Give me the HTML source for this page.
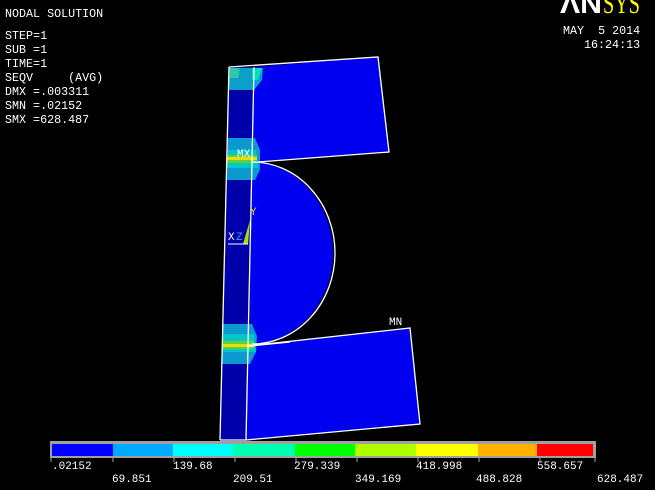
<!DOCTYPE html>
<html><head><meta charset="utf-8"><style>
html,body{margin:0;padding:0;background:#000;width:655px;height:490px;overflow:hidden}
svg{display:block}
text{font-family:"Liberation Mono",monospace;font-size:11px;fill:#fff;white-space:pre}
.t{font-size:11.7px}
</style></head><body>
<svg width="655" height="490" viewBox="0 0 655 490" xml:space="preserve">
<rect width="655" height="490" fill="#000"/>
<polygon points="252,67 378,57 389,152 252,162" fill="#0000f0"/>
<path d="M250,162 A83,91 0 0 1 250,344 Z" fill="#0000f0"/>
<polygon points="248,346 410,328 420,424 246,440" fill="#0000f0"/>
<polygon points="229,67 254,67 246,440 220,440" fill="#0000aa"/>
<path d="M229,68 L263,68 L262,80 L254,90 L229,90 Z" fill="#0aa0c8"/>
<path d="M230,68 L240,68 L238,78 L230,78Z" fill="#30c8a0"/>
<path d="M252,68 L262,68 L258,80 L252,80Z" fill="#00e0c0"/>
<path d="M228,138 L255,138 L260,150 L260,170 L255,180 L227,180 Z" fill="#0a9ad0"/>
<path d="M228,150 L256,150 L258,168 L227,168 Z" fill="#00c8c8"/>
<rect x="227" y="155" width="30" height="8" fill="#60d040"/>
<rect x="227" y="157" width="30" height="3" fill="#e8e000"/>
<path d="M223,324 L252,324 L257,336 L256,352 L250,364 L222,364 Z" fill="#0a9ad0"/>
<path d="M223,334 L254,334 L256,352 L222,352 Z" fill="#00c8c8"/>
<rect x="222" y="341" width="32" height="8" fill="#60d040"/>
<rect x="222" y="344" width="32" height="3" fill="#e8e000"/>
<polygon points="250,220 248,244 243,244" fill="#a8e000"/>
<g fill="none" stroke="#fff" stroke-width="1.3">
<polyline points="229,67 378,57 389,152 258,162"/>
<line x1="229" y1="67" x2="220" y2="440"/>
<line x1="254" y1="67" x2="246" y2="440"/>
<path d="M252,162 A83,91 0 0 1 252,344"/>
<polyline points="248,346 410,328 420,424 246,440 220,440"/>
<line x1="250" y1="346" x2="290" y2="342"/>
</g>
<text x="237" y="157" font-size="10">MX</text>
<text x="389" y="325" font-size="10">MN</text>
<text x="250" y="215" style="fill:#d0e000">Y</text>
<text x="228" y="240">X</text><text x="236" y="240" style="fill:#30a0ff">Z</text>
<line x1="228" y1="244" x2="248" y2="244" stroke="#fff"/>
<text class="t" x="5" y="17">NODAL SOLUTION</text>
<text class="t" x="5" y="39">STEP=1</text>
<text class="t" x="5" y="53">SUB =1</text>
<text class="t" x="5" y="67">TIME=1</text>
<text class="t" x="5" y="81">SEQV     (AVG)</text>
<text class="t" x="5" y="95">DMX =.003311</text>
<text class="t" x="5" y="109">SMN =.02152</text>
<text class="t" x="5" y="123">SMX =628.487</text>
<text class="t" x="563" y="34">MAY  5 2014</text>
<text class="t" x="584" y="48">16:24:13</text>
<text x="560" y="13" textLength="42" lengthAdjust="spacingAndGlyphs" style="font-family:'Liberation Sans',sans-serif;font-size:28px;font-weight:bold;fill:#fff">ΛN</text>
<text x="603" y="13" textLength="37" lengthAdjust="spacingAndGlyphs" style="font-family:'Liberation Serif',serif;font-size:28px;fill:#ffff00">SYS</text>
<rect x="50" y="441" width="546" height="17" fill="#a0a0a0"/>
<g>
<rect x="52" y="444" width="61" height="12" fill="#0000ff"/>
<rect x="113" y="444" width="60" height="12" fill="#00aaff"/>
<rect x="173" y="444" width="60" height="12" fill="#00ffff"/>
<rect x="233" y="444" width="62" height="12" fill="#00ffb0"/>
<rect x="295" y="444" width="60" height="12" fill="#00ff00"/>
<rect x="355" y="444" width="61" height="12" fill="#b0ff00"/>
<rect x="416" y="444" width="62" height="12" fill="#ffff00"/>
<rect x="478" y="444" width="59" height="12" fill="#ffb000"/>
<rect x="537" y="444" width="56" height="12" fill="#ff0000"/>
</g>
<g stroke="#a0a0a0">
<line x1="51" y1="458" x2="51" y2="462"/><line x1="113" y1="458" x2="113" y2="462"/>
<line x1="174" y1="458" x2="174" y2="462"/><line x1="235" y1="458" x2="235" y2="462"/>
<line x1="296" y1="458" x2="296" y2="462"/><line x1="357" y1="458" x2="357" y2="462"/>
<line x1="418" y1="458" x2="418" y2="462"/><line x1="479" y1="458" x2="479" y2="462"/>
<line x1="540" y1="458" x2="540" y2="462"/><line x1="595" y1="458" x2="595" y2="462"/>
</g>
<text x="52" y="469">.02152</text>
<text x="173" y="469">139.68</text>
<text x="294" y="469">279.339</text>
<text x="416" y="469">418.998</text>
<text x="537" y="469">558.657</text>
<text x="112" y="482">69.851</text>
<text x="233" y="482">209.51</text>
<text x="355" y="482">349.169</text>
<text x="476" y="482">488.828</text>
<text x="597" y="482">628.487</text>
</svg>
</body></html>
